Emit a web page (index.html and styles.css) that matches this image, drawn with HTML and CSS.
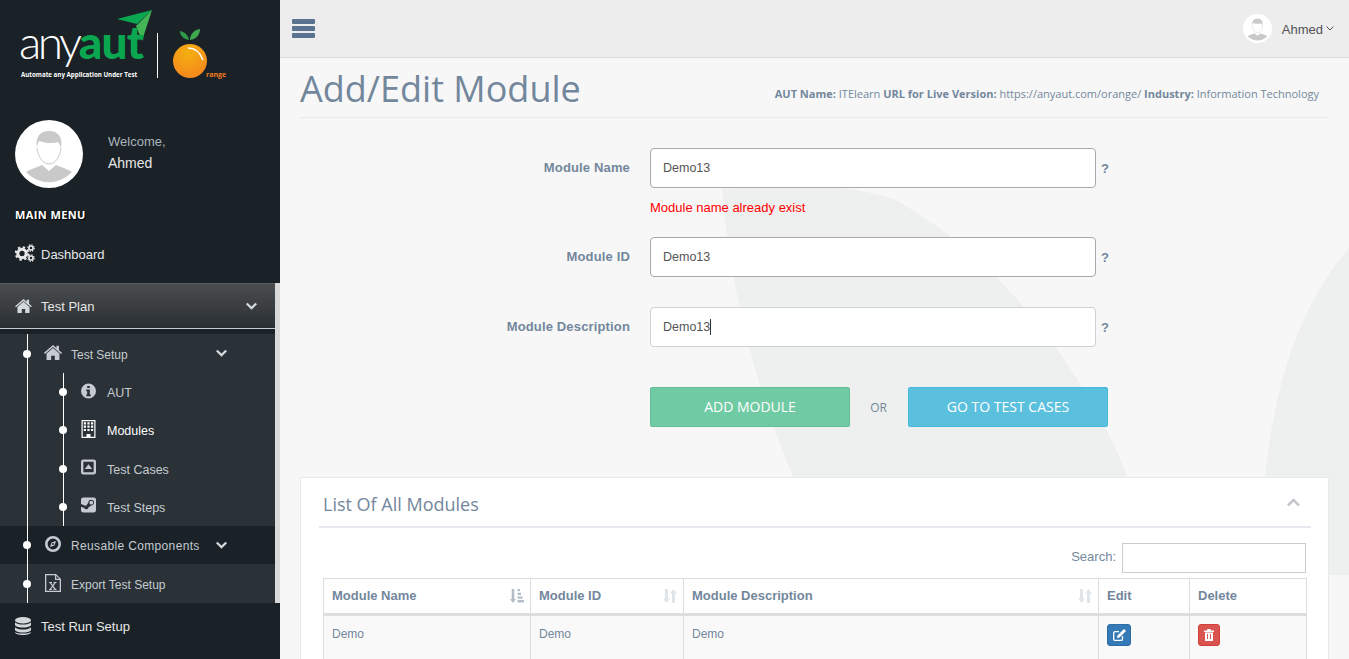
FILE: index.html
```html
<!DOCTYPE html>
<html lang="en">
<head>
  <meta charset="UTF-8">
  <meta name="viewport" content="width=device-width, initial-scale=1.0">
  <title>Add/Edit Module</title>
  <link rel="stylesheet" href="styles.css">
</head>
<body>
<svg class="icon-defs" width="0" height="0">
  <defs>
    <radialGradient id="orange-fill" cx="45%" cy="25%" r="85%">
      <stop offset="0" stop-color="#f4b010"/>
      <stop offset="1" stop-color="#f5821f"/>
    </radialGradient>
  </defs>
  <symbol id="i-home" viewBox="0 0 24 20"><path d="M12 0 0 10.400l1.300 1.500L12 2.800l10.700 9.100 1.300-1.500-4-3.500V1h-3.400v3z"/><path d="M12 4 3.400 11.400V20h6.200v-5.600h4.800V20h6.200v-8.600z"/></symbol>
  <symbol id="i-chevron" viewBox="0 0 12 8"><path d="M1.700 .4 6 4.600 10.300 .4 12 2.100 6 8 0 2.100z"/></symbol>
  <symbol id="i-gears" viewBox="0 0 20 18">
    <circle cx="7" cy="9.500" r="4.200" fill="none" stroke="currentColor" stroke-width="3"/>
    <circle cx="7" cy="9.500" r="6.200" fill="none" stroke="currentColor" stroke-width="2.200" stroke-dasharray="2.400 2.470"/>
    <circle cx="16" cy="4" r="2" fill="none" stroke="currentColor" stroke-width="1.600"/>
    <circle cx="16" cy="4" r="3.200" fill="none" stroke="currentColor" stroke-width="1.200" stroke-dasharray="1.400 1.100"/>
    <circle cx="16" cy="14" r="2" fill="none" stroke="currentColor" stroke-width="1.600"/>
    <circle cx="16" cy="14" r="3.200" fill="none" stroke="currentColor" stroke-width="1.200" stroke-dasharray="1.400 1.100"/>
  </symbol>
  <symbol id="i-info" viewBox="0 0 16 16"><path fill-rule="evenodd" d="M8 0a8 8 0 1 0 0 16A8 8 0 0 0 8 0zM6.600 2.600h2.800v2.300H6.600zM5.600 6.400h3.800v5.200h1v1.900H5.600v-1.900h1V8.300h-1z"/></symbol>
  <symbol id="i-building" viewBox="0 0 14 18"><path fill-rule="evenodd" d="M0 0h14v18H0zM1.200 1.200v15.600h3.800v-2.800h4v2.800h3.800V1.200z"/><path d="M2.300 2.300h2.200v2.200H2.300zM5.900 2.300h2.200v2.200H5.900zM9.500 2.300h2.200v2.200H9.500zM2.300 5.600h2.200v2.200H2.300zM5.900 5.600h2.200v2.200H5.900zM9.500 5.600h2.200v2.200H9.500zM2.300 8.900h2.200v2.200H2.300zM5.900 8.900h2.200v2.200H5.900zM9.500 8.900h2.200v2.200H9.500z"/></symbol>
  <symbol id="i-caret-box" viewBox="0 0 16 16"><path fill-rule="evenodd" d="M2.500 0h11A2.500 2.500 0 0 1 16 2.500v11a2.500 2.500 0 0 1-2.500 2.500h-11A2.500 2.500 0 0 1 0 13.500v-11A2.500 2.500 0 0 1 2.500 0zM2.500 2.500v11h11v-11zM8 5l4 5H4z"/></symbol>
  <symbol id="i-steam" viewBox="0 0 16 16"><path fill-rule="evenodd" d="M2.500 0h11A2.500 2.500 0 0 1 16 2.500v11a2.500 2.500 0 0 1-2.500 2.500h-11A2.500 2.500 0 0 1 0 13.500V9.800l3.500 1.400a2.300 2.300 0 0 0 4.400-.6l3-2.200a3 3 0 1 0-3-3L5.800 8.500a2.300 2.300 0 0 0-1.400.3L0 7V2.500A2.500 2.500 0 0 1 2.500 0zM11 3.500a2 2 0 1 1 0 4 2 2 0 0 1 0-4z"/></symbol>
  <symbol id="i-compass" viewBox="0 0 16 16"><path fill-rule="evenodd" d="M8 0a8 8 0 1 0 0 16A8 8 0 0 0 8 0zm0 2.600a5.400 5.400 0 1 1 0 10.800A5.400 5.400 0 0 1 8 2.600zM11 5 6.500 6.500 5 11l4.500-1.500zM8 7a1 1 0 1 1 0 2 1 1 0 0 1 0-2z"/></symbol>
  <symbol id="i-excel" viewBox="0 0 16 18"><path fill-rule="evenodd" d="M0 0h11l5 5v13H0zM1.300 1.300v15.400h13.400V6H10V1.300zM11.300 1.800V4.700h2.900z"/><path d="M4 8h3v1H6.300l1.400 2 1.400-2H8.500V8h3v1h-.8L8.500 12l2.300 3h.7v1h-3v-1h.6l-1.400-2-1.400 2h.6v1H4v-1h.8L7 12 4.800 9H4z"/></symbol>
  <symbol id="i-database" viewBox="0 0 16 18"><ellipse cx="8" cy="3.200" rx="8" ry="3.200"/><path d="M0 5.200c1.200 1.600 4.600 2.300 8 2.300s6.800-.7 8-2.300v3c-1 1.700-4.600 2.400-8 2.400s-7-.7-8-2.400zM0 10.200c1.200 1.600 4.600 2.300 8 2.300s6.800-.7 8-2.300v3c-1 1.700-4.600 2.400-8 2.400s-7-.7-8-2.400zM0 15c1.200 1.100 4.600 1.600 8 1.600s6.800-.5 8-1.600c0 1.900-3.600 3-8 3s-8-1.100-8-3z"/></symbol>
  <symbol id="i-avatar" viewBox="0 0 68 68">
    <circle cx="34" cy="34" r="34" fill="#fff"/>
    <path fill="#c9c9c9" d="M11 52c4-3 12-5 16-7l7 6 7-6c4 2 12 4 16 7a31 31 0 0 1-46 0z"/>
    <path fill="#c9c9c9" d="M22 28c-2-11 3-17 12-17s14 6 12 17c-1-3-2-5-3-6-6 2-13 1-19-1-1 2-2 4-2 7z"/>
    <path fill="none" stroke="#c9c9c9" stroke-width="1" d="M22 28c1 9 6 16 12 16s11-7 12-16"/>
  </symbol>
  <symbol id="i-sort" viewBox="0 0 14 14"><path d="M3.500 14 0 9.500h2V0h3v9.500h2zM10.500 0 14 4.500h-2V14H9V4.500H7z"/></symbol>
  <symbol id="i-sort-asc" viewBox="0 0 14 14"><path d="M3 14 0 10h1.700V0h2.600v10H6zM7.500 0h2.500v2.300H7.500zM7.500 3.700h3.500V6H7.500zM7.500 7.400h5v2.300h-5zM7.500 11.100H14v2.300H7.500z"/></symbol>
</svg>

<div class="layout">
  <aside class="sidebar">
    <div class="logo">
      <svg width="240" height="90" viewBox="0 0 240 90">
        <path fill="#0aa650" d="M117 19 152 10 137 24z"/>
        <path fill="#43b555" d="M152 10 142 41 136 26z"/>
        <text x="19" y="59" class="logo-word"><tspan class="logo-any">any</tspan><tspan class="logo-aut">aut</tspan></text>
        <text x="21" y="77" class="logo-tag">Automate any Application Under Test</text>
        <rect x="157" y="33" width="1" height="45" fill="#fff"/>
        <path fill="#2f9a4a" d="M189 40c-5-1-9-4-9-9 5 1 8 4 9 9z"/>
        <path fill="#3fa950" d="M190 40c0-6 4-10 10-11 0 6-4 10-10 11z"/>
        <circle cx="190" cy="61" r="17" fill="url(#orange-fill)"/>
        <path fill="none" stroke="#fff" stroke-width="1.500" d="M188 48c7 0 12 4 15 12"/>
        <text x="206" y="77" class="logo-orange">range</text>
      </svg>
    </div>
    <div class="profile">
      <svg class="profile-pic"><use href="#i-avatar"/></svg>
      <div class="profile-text">
        <span class="welcome">Welcome,</span>
        <span class="profile-name">Ahmed</span>
      </div>
    </div>
    <h3 class="menu-title">MAIN MENU</h3>
    <a class="nav-top dash"><svg class="ico ico-gears"><use href="#i-gears"/></svg>Dashboard</a>

    <div class="plan">
      <a class="plan-head"><svg class="ico ico-home"><use href="#i-home"/></svg>Test Plan<svg class="chev"><use href="#i-chevron"/></svg></a>
      <div class="plan-gap"></div>
      <ul class="tree">
        <li class="tree-row"><svg class="ico ico-sub ico-sub-home"><use href="#i-home"/></svg>Test Setup<svg class="chev chev-sub"><use href="#i-chevron"/></svg></li>
        <li class="subtree-wrap">
          <ul class="subtree">
            <li class="sub-row"><svg class="ico ico-leaf"><use href="#i-info"/></svg>AUT</li>
            <li class="sub-row active"><svg class="ico ico-leaf"><use href="#i-building"/></svg>Modules</li>
            <li class="sub-row"><svg class="ico ico-leaf"><use href="#i-caret-box"/></svg>Test Cases</li>
            <li class="sub-row"><svg class="ico ico-leaf"><use href="#i-steam"/></svg>Test Steps</li>
          </ul>
        </li>
        <li class="tree-row dark"><svg class="ico ico-sub"><use href="#i-compass"/></svg>Reusable Components<svg class="chev chev-sub"><use href="#i-chevron"/></svg></li>
        <li class="tree-row"><svg class="ico ico-sub ico-sub-excel"><use href="#i-excel"/></svg>Export Test Setup</li>
      </ul>
    </div>

    <a class="nav-top run"><svg class="ico ico-db"><use href="#i-database"/></svg>Test Run Setup</a>
  </aside>

  <main class="main">
    <svg class="bg-art" width="1069" height="518" viewBox="0 0 1069 518">
      <path d="M442 132Q540 118 616 143 730 208 810 343 840 393 855 443L526 450Q455 293 442 132z"/>
      <path d="M1069 191Q1000 270 985 420V518H1069z"/>
    </svg>

    <header class="topbar">
      <svg class="menu-btn" width="23" height="19" viewBox="0 0 23 19"><path d="M1 0h21a1 1 0 0 1 1 1v3a1 1 0 0 1-1 1H1a1 1 0 0 1-1-1V1a1 1 0 0 1 1-1zM1 7h21a1 1 0 0 1 1 1v3a1 1 0 0 1-1 1H1a1 1 0 0 1-1-1V8a1 1 0 0 1 1-1zM1 14h21a1 1 0 0 1 1 1v3a1 1 0 0 1-1 1H1a1 1 0 0 1-1-1v-3a1 1 0 0 1 1-1z"/></svg>
      <div class="top-user">
        <svg class="top-pic"><use href="#i-avatar"/></svg>
        <span class="top-name">Ahmed</span>
        <svg class="top-chev" viewBox="0 0 8 5"><path d="M.5 .5 4 4 7.500 .5"/></svg>
      </div>
    </header>

    <div class="content">
      <div class="page-title">
        <h1>Add/Edit Module</h1>
        <p class="aut-info"><b>AUT Name:</b> ITElearn <b>URL for Live Version:</b> https://anyaut.com/orange/ <b>Industry:</b> Information Technology</p>
      </div>

      <form class="module-form">
        <div class="form-row">
          <label for="modName">Module Name</label>
          <input class="hover-field" type="text" id="modName" value="Demo13">
          <span class="hint">?</span>
        </div>
        <div class="form-error">Module name already exist</div>
        <div class="form-row">
          <label for="modId">Module ID</label>
          <input class="hover-field" type="text" id="modId" value="Demo13">
          <span class="hint">?</span>
        </div>
        <div class="form-row row-desc">
          <label for="modDesc">Module Description</label>
          <div class="fake-input" id="modDesc">Demo13<i class="caret"></i></div>
          <span class="hint">?</span>
        </div>
        <div class="form-actions">
          <button type="button" class="btn btn-add">ADD MODULE</button>
          <span class="or">OR</span>
          <button type="button" class="btn btn-go">GO TO TEST CASES</button>
        </div>
      </form>

      <section class="panel">
        <div class="panel-title">
          <h2>List Of All Modules</h2>
          <svg class="collapse"><use href="#i-chevron"/></svg>
        </div>
        <div class="search-row">
          <label for="search">Search:</label>
          <input type="search" id="search">
        </div>
        <table class="grid">
          <colgroup>
            <col class="c1"><col class="c2"><col class="c3"><col class="c4"><col class="c5">
          </colgroup>
          <thead>
            <tr>
              <th>Module Name<svg class="sort sort-on"><use href="#i-sort-asc"/></svg></th>
              <th>Module ID<svg class="sort"><use href="#i-sort"/></svg></th>
              <th>Module Description<svg class="sort"><use href="#i-sort"/></svg></th>
              <th>Edit</th>
              <th>Delete</th>
            </tr>
          </thead>
          <tbody>
            <tr>
              <td>Demo</td>
              <td>Demo</td>
              <td>Demo</td>
              <td><span class="act act-edit"><svg width="13" height="12" viewBox="0 0 13 12"><path fill="none" stroke="#fff" stroke-width="1.300" d="M9.500 7v3a1.300 1.300 0 0 1-1.300 1.300H2A1.300 1.300 0 0 1 .7 10V4A1.300 1.300 0 0 1 2 2.700h4"/><path fill="#fff" d="M11 0l2 2-6.500 6.500L4 9l.5-2.500z"/></svg></span></td>
              <td><span class="act act-del"><svg width="10" height="12" viewBox="0 0 10 12"><path fill="#fff" fill-rule="evenodd" d="M3.500 0h3l.5 1.500h3V3H0V1.500h3zM1 3.500h8V12H1zM3 5v5h1V5zM6 5v5h1V5z"/></svg></span></td>
            </tr>
          </tbody>
        </table>
      </section>
    </div>
  </main>
</div>
</body>
</html>
```
FILE: styles.css
```css
* {
  box-sizing: border-box;
}
html, body {
  margin: 0;
  padding: 0;
  height: 100%;
  overflow: hidden;
}
body {
  font-family: "Liberation Sans", Arial, sans-serif;
  background-color: #f7f7f7;
  color: #73879c;
}
.icon-defs {
  display: block;
  height: 0;
}
.layout {
  display: flex;
  height: 659px;
}

/* sidebar */
.sidebar {
  width: 280px;
  flex: none;
  background-color: #1a2227;
  color: #e7e7e7;
}
.logo {
  height: 105px;
}
.logo svg {
  display: block;
}
.logo-word {
  font-family: Lato, sans-serif;
  font-size: 46px;
}
.logo-any {
  font-weight: 300;
  letter-spacing: -3.500px;
  fill: #fff;
}
.logo-aut {
  font-weight: 900;
  letter-spacing: -.8px;
  fill: #0aa650;
}
.logo-tag {
  font-family: "Open Sans", sans-serif;
  font-weight: 700;
  font-size: 6.200px;
  fill: #fff;
}
.logo-orange {
  font-family: "Open Sans", sans-serif;
  font-weight: 700;
  font-size: 7px;
  fill: #f47a1c;
}
.profile {
  display: flex;
  align-items: center;
  gap: 25px;
  padding: 15px 0 0 15px;
}
.profile-pic {
  width: 68px;
  height: 68px;
  flex: none;
}
.profile-text {
  display: flex;
  flex-direction: column;
  gap: 6px;
  font-size: 14px;
  padding-bottom: 4px;
}
.welcome {
  font-size: 13px;
  color: #a9b3bb;
}
.menu-title {
  margin: 19px 0 0 15px;
  font-family: "Open Sans", sans-serif;
  font-size: 11px;
  font-weight: 700;
  line-height: 15px;
  letter-spacing: .4px;
  color: #fff;
  text-shadow: 1px 1px 1px #000;
}
.nav-top {
  display: flex;
  align-items: center;
  font-size: 13px;
  color: #e7e7e7;
}
.dash {
  height: 61px;
  padding: 4px 0 0 15px;
}
.plan {
  border-right: 5px solid #d9d9d9;
}
.plan-head {
  display: flex;
  align-items: center;
  height: 46px;
  padding-left: 15px;
  font-size: 13px;
  color: #e7e7e7;
  background: linear-gradient(#4a4d4f, #2a2f33);
  border-top: 1px solid #5a5d60;
  border-bottom: 1px solid #c8cbcd;
}
.plan-gap {
  height: 5px;
  background-color: #1a2227;
}
.chev {
  width: 11px;
  height: 8px;
  margin-left: auto;
  margin-right: 18px;
  fill: #d3d8dc;
}
.ico {
  fill: #d3d8dc;
  color: #e7e7e7;
  flex: none;
}
.ico-gears {
  width: 20px;
  height: 18px;
  margin-right: 6px;
  margin-top: -3px;
}
.ico-home {
  width: 17px;
  height: 14px;
  margin-right: 9px;
}
.ico-db {
  width: 16px;
  height: 18px;
  margin-right: 10px;
}
.tree, .subtree {
  list-style: none;
  margin: 0;
  padding: 0;
}
.tree {
  position: relative;
  background-color: #2a3137;
}
.tree::before {
  content: "";
  position: absolute;
  left: 27px;
  top: 0;
  bottom: 0;
  width: 1px;
  background-color: #fff;
  z-index: 1;
}
.tree-row {
  position: relative;
  display: flex;
  align-items: center;
  height: 39px;
  padding: 2px 0 0 45px;
  font-size: 12px;
  color: #c5cbd0;
}
.tree-row::before, .sub-row::before {
  content: "";
  position: absolute;
  width: 8px;
  height: 8px;
  border-radius: 50%;
  background-color: #fff;
  top: 50%;
  margin-top: -4px;
  z-index: 1;
}
.tree-row::before {
  left: 23px;
}
.tree-row.dark {
  height: 38px;
  background-color: #1a2227;
  letter-spacing: .35px;
}
.ico-sub {
  width: 16px;
  height: 16px;
  margin-right: 10px;
  margin-top: -4px;
  fill: #c5cbd0;
}
.ico-sub-home {
  width: 18px;
  height: 15px;
  margin-left: -1px;
  margin-right: 9px;
}
.ico-sub-excel {
  height: 18px;
}
.chev-sub {
  margin-top: -3px;
  margin-left: auto;
  margin-right: 48px;
  fill: #d3d8dc;
}
.subtree-wrap {
  position: relative;
}
.subtree::before {
  content: "";
  position: absolute;
  left: 63px;
  top: 0;
  bottom: 0;
  width: 1px;
  background-color: #fff;
}
.sub-row {
  position: relative;
  display: flex;
  align-items: center;
  height: 38.250px;
  padding: 2px 0 0 81px;
  font-size: 12.500px;
  color: #c5cbd0;
}
.sub-row::before {
  left: 59px;
}
.sub-row.active {
  color: #fff;
}
.ico-leaf {
  width: 15px;
  height: 18px;
  margin-right: 11px;
  margin-top: -5px;
  fill: #c5cbd0;
}
.sub-row.active .ico-leaf {
  fill: #fff;
}
.run {
  height: 46px;
  padding-left: 15px;
}

/* main */
.main {
  position: relative;
  flex: 1;
  min-width: 0;
}
.bg-art {
  position: absolute;
  left: 0;
  top: 57px;
  fill: #eef0ef;
}
.topbar {
  position: relative;
  display: flex;
  align-items: center;
  justify-content: space-between;
  height: 58px;
  padding: 0 15px 0 12px;
  background-color: #ededed;
  border-bottom: 1px solid #d9dee4;
}
.menu-btn {
  fill: #5a738e;
}
.top-user {
  display: flex;
  align-items: center;
  font-size: 13px;
  color: #515356;
}
.top-name {
  padding-top: 1px;
}
.top-pic {
  width: 29px;
  height: 29px;
  margin-right: 10px;
}
.top-chev {
  width: 8px;
  height: 5px;
  margin-left: 3px;
  fill: none;
  stroke: #515356;
  stroke-width: 1;
}
.content {
  position: relative;
  padding: 0 20px;
}
.page-title {
  display: flex;
  align-items: flex-end;
  justify-content: space-between;
  height: 60px;
  padding: 0 10px 0 0;
  border-bottom: 1px solid #e9ebee;
}
.page-title h1 {
  margin: 0 0 5px;
  font-family: "Open Sans", sans-serif;
  font-size: 36px;
  font-weight: 400;
  line-height: 46px;
  color: #73879c;
}
.aut-info {
  margin: 0 0 16px;
  font-family: "Open Sans", sans-serif;
  font-size: 11px;
  line-height: 15px;
}

/* form */
.module-form {
  padding-top: 30px;
}
.form-row {
  display: flex;
  align-items: center;
  height: 40px;
}
.form-row label {
  width: 350px;
  padding: 0 20px 2px 0;
  text-align: right;
  font-size: 13px;
  font-weight: 700;
  letter-spacing: .15px;
  color: #73879c;
}
.form-row input, .fake-input {
  width: 446px;
  height: 40px;
  padding: 0 12px 1px;
  font-family: "Liberation Sans", Arial, sans-serif;
  font-size: 12.500px;
  color: #555;
  background-color: #fff;
  border: 1px solid #ccd0d7;
  border-radius: 4px;
}
.form-row input.hover-field {
  border-color: #a9a9a9;
}
.fake-input {
  display: flex;
  align-items: center;
}
.caret {
  width: 1px;
  height: 16px;
  background-color: #333;
}
.hint {
  margin-left: 5px;
  padding-top: 1px;
  font-size: 13px;
  font-weight: 700;
  color: #73879c;
}
.form-error {
  height: 49px;
  padding: 12px 0 0 350px;
  font-size: 13px;
  line-height: 15px;
  color: #f00;
}
.row-desc {
  margin-top: 30px;
}
.form-actions {
  display: flex;
  align-items: center;
  padding: 40px 0 0 350px;
}
.btn {
  height: 40px;
  padding: 0 0 2px;
  font-family: "Open Sans", sans-serif;
  font-size: 14px;
  color: #fff;
  border-radius: 2px;
  cursor: pointer;
}
.btn-add {
  width: 200px;
  background-color: #70cba4;
  border: 1px solid #65bd97;
}
.btn-go {
  width: 200px;
  background-color: #5bc0de;
  border: 1px solid #46b8da;
}
.or {
  width: 58px;
  padding-right: 1px;
  text-align: center;
  font-family: "Open Sans", sans-serif;
  font-size: 12px;
}

/* list panel */
.panel {
  margin: 50px 0 0;
  padding: 0 17px 0 18px;
  background-color: #fff;
  border: 1px solid #e6e9ed;
}
.panel-title {
  display: flex;
  align-items: center;
  justify-content: space-between;
  height: 50px;
  padding: 3px 11px 0 4px;
  border-bottom: 2px solid #e6e9ed;
}
.panel-title h2 {
  margin: 0;
  font-family: "Open Sans", sans-serif;
  font-size: 18px;
  font-weight: 400;
  color: #73879c;
}
.collapse {
  width: 13px;
  height: 9px;
  margin-top: -3px;
  fill: #c5c7cb;
  transform: rotate(180deg);
}
.search-row {
  display: flex;
  align-items: center;
  justify-content: flex-end;
  gap: 6px;
  padding: 15px 5px 0 4px;
  font-size: 13px;
}
.search-row label {
  padding-bottom: 3px;
}
.search-row input {
  width: 184px;
  height: 30px;
  padding: 0 6px;
  background-color: #fff;
  border: 1px solid #ccc;
}
.grid {
  width: 983px;
  margin: 5px 0 0 4px;
  border-collapse: collapse;
  table-layout: fixed;
  font-size: 12px;
}
.c1 { width: 207px; }
.c2 { width: 153px; }
.c3 { width: 415px; }
.c4 { width: 91px; }
.c5 { width: 117px; }
.grid th, .grid td {
  position: relative;
  padding: 8px;
  text-align: left;
  border: 1px solid #ddd;
}
.grid th {
  height: 36px;
  padding: 7px 8px 9px;
  font-size: 13px;
  font-weight: 700;
  border-bottom: 3px solid #ddd;
  background-color: #fff;
}
.grid td {
  height: 46px;
  padding-top: 11px;
  vertical-align: top;
  background-color: #f9f9f9;
}
.sort {
  position: absolute;
  right: 6px;
  top: 10px;
  width: 14px;
  height: 14px;
  fill: #e0e5ea;
}
.sort-on {
  fill: #b4bdc6;
}
.act {
  display: flex;
  align-items: center;
  justify-content: center;
  height: 22px;
  margin-top: -3px;
  border-radius: 3px;
}
.act-edit {
  width: 24px;
  background-color: #337ab7;
  border: 1px solid #2e6da4;
}
.act-del {
  width: 22px;
  background-color: #d9534f;
  border: 1px solid #d43f3a;
}
```
